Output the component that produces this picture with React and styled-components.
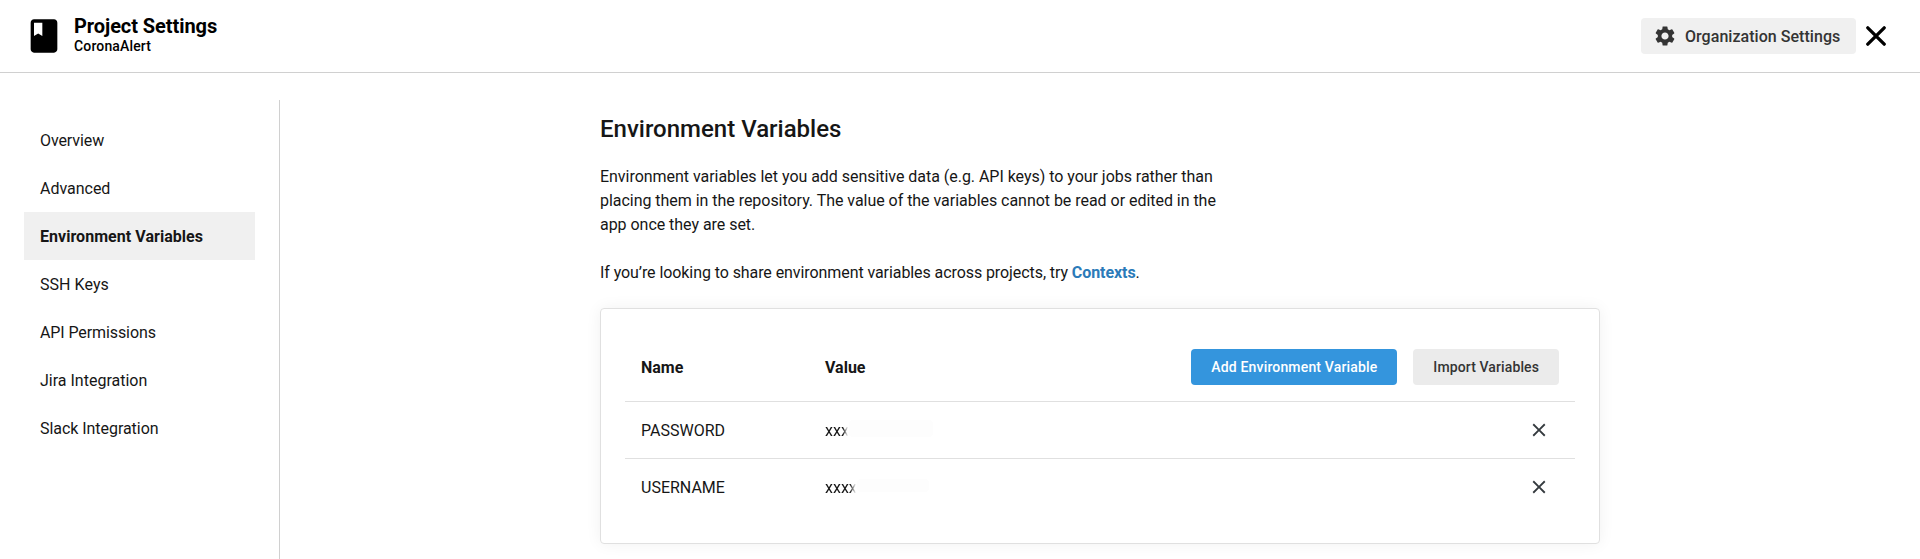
import React from "react";
import styled, { createGlobalStyle } from "styled-components";
import { MdBook, MdClose, MdSettings } from "react-icons/md";

const GlobalStyle = createGlobalStyle`
  *, *::before, *::after { box-sizing: border-box; }
  body {
    margin: 0;
    background: #fff;
    color: #161616;
    font-family: Roboto, "Liberation Sans", sans-serif;
    font-size: 16px;
    line-height: 24px;
  }
`;

const Page = styled.div`
  display: flex;
  flex-direction: column;
  height: 559px;
  overflow: hidden;
`;

const Header = styled.header`
  display: flex;
  align-items: center;
  flex: none;
  height: 73px;
  padding: 0 34px 0 24px;
  border-bottom: 1px solid #d0d0d0;
  color: #000;
`;

const ProjectIcon = styled(MdBook)`
  width: 40px;
  height: 40px;
  flex: none;
`;

const HeaderText = styled.div`
  flex: 1;
  margin-left: 10px;
  padding-bottom: 4px;
`;

const HeaderTitle = styled.div`
  font-size: 20px;
  font-weight: 700;
  line-height: 24px;
  letter-spacing: -0.07px;
`;

const HeaderSubtitle = styled.div`
  font-size: 14px;
  font-weight: 500;
  line-height: 16px;
  letter-spacing: 0.15px;
`;

const OrgButton = styled.button`
  display: flex;
  align-items: center;
  gap: 8px;
  width: 215px;
  height: 36px;
  padding: 0 0 0 12px;
  border: 0;
  border-radius: 4px;
  background: #f0f0f0;
  color: #343434;
  font: 500 16px/24px Roboto, sans-serif;
  letter-spacing: 0.04px;
  white-space: nowrap;
`;

const OrgLabel = styled.span`
  padding-top: 1px;
`;

const CloseButton = styled.button`
  display: flex;
  margin-left: 10px;
  padding: 0;
  border: 0;
  background: none;
  color: #000;
`;

const Body = styled.div`
  display: flex;
  flex: 1;
  min-height: 0;
  padding-top: 27px;
`;

const Sidebar = styled.nav`
  flex: none;
  width: 280px;
  padding: 16px 24px;
  border-right: 1px solid #d0d0d0;
`;

const NavItem = styled.a`
  display: block;
  padding: 13px 16px 11px;
  background: ${(p) => (p.$active ? "#f0f0f0" : "transparent")};
  font-weight: ${(p) => (p.$active ? 700 : 400)};
  letter-spacing: ${(p) => p.$tracking}px;
`;

const Main = styled.main`
  width: 1000px;
  margin: 13px auto 0;
`;

const Title = styled.h1`
  margin: 0 0 20px;
  font-size: 24px;
  font-weight: 500;
  line-height: 32px;
`;

const Paragraph = styled.p`
  width: 640px;
  margin: 0 0 24px;
  letter-spacing: -0.035px;

  &:last-of-type {
    margin-bottom: 23px;
    letter-spacing: -0.08px;
  }
`;

const Link = styled.a`
  color: #2b7bb9;
  font-weight: 700;
`;

const Card = styled.section`
  padding: 24px 24px 28px;
  border: 1px solid #e0e0e0;
  border-radius: 4px;
  box-shadow: 0 0 16px rgba(0, 0, 0, 0.06);
`;

const Row = styled.div`
  display: grid;
  grid-template-columns: 184px 1fr auto;
  align-items: center;
  height: ${(p) => (p.$head ? 69 : 57)}px;
  padding: 0 16px;
  border-bottom: 1px solid #e0e0e0;
  font-weight: ${(p) => (p.$head ? 700 : 400)};

  &:last-child {
    height: 56px;
    border-bottom: 0;
  }
`;

const Cell = styled.div`
  display: flex;
  align-items: center;
  padding-top: 2px;
`;

const Actions = styled.div`
  display: flex;
  gap: 16px;
`;

const Button = styled.button`
  height: 36px;
  padding: 0 20px;
  border: 0;
  border-radius: 4px;
  background: ${(p) => (p.$primary ? "#3495dd" : "#ebebeb")};
  color: ${(p) => (p.$primary ? "#fff" : "#343434")};
  font: 500 14px/20px Roboto, sans-serif;
  letter-spacing: ${(p) => (p.$primary ? 0.16 : 0.11)}px;
`;

const DeleteButton = styled.button`
  display: flex;
  margin-right: 9px;
  padding: 0;
  border: 0;
  background: none;
  color: #343a3e;
`;

const MaskedText = styled.span`
  mask-image: linear-gradient(
    to right,
    #000 calc(100% - ${(p) => p.$fade}px),
    transparent calc(100% - 1px)
  );
`;

const Redaction = styled.span`
  width: ${(p) => p.$width}px;
  height: ${(p) => p.$height}px;
  margin-top: -6px;
  border-radius: 4px;
  background: #fdfdfd;
`;

const CloseIcon = () => (
  <svg width="20" height="20" viewBox="0 0 20 20" fill="none">
    <path
      d="M1.8 1.8L18.2 18.2M18.2 1.8L1.8 18.2"
      stroke="currentColor"
      strokeWidth="3.3"
      strokeLinecap="round"
    />
  </svg>
);

const NAV = [
  { label: "Overview", tracking: -0.1 },
  { label: "Advanced", tracking: -0.02 },
  { label: "Environment Variables", tracking: 0.04, active: true },
  { label: "SSH Keys", tracking: 0.05 },
  { label: "API Permissions", tracking: -0.1 },
  { label: "Jira Integration", tracking: 0 },
  { label: "Slack Integration", tracking: -0.05 },
];

const VARIABLES = [
  { name: "PASSWORD", value: "xxx", fade: 6, width: 84, height: 17 },
  { name: "USERNAME", value: "xxxx", fade: 7, width: 72, height: 13 },
];

export default function App() {
  return (
    <Page>
      <GlobalStyle />
      <Header>
        <ProjectIcon />
        <HeaderText>
          <HeaderTitle>Project Settings</HeaderTitle>
          <HeaderSubtitle>CoronaAlert</HeaderSubtitle>
        </HeaderText>
        <OrgButton>
          <MdSettings size={24} />
          <OrgLabel>Organization Settings</OrgLabel>
        </OrgButton>
        <CloseButton aria-label="Close">
          <CloseIcon />
        </CloseButton>
      </Header>
      <Body>
        <Sidebar>
          {NAV.map((item) => (
            <NavItem
              key={item.label}
              $active={item.active}
              $tracking={item.tracking}
            >
              {item.label}
            </NavItem>
          ))}
        </Sidebar>
        <Main>
          <Title>Environment Variables</Title>
          <Paragraph>
            Environment variables let you add sensitive data (e.g. API keys) to
            your jobs rather than placing them in the repository. The value of
            the variables cannot be read or edited in the app once they are set.
          </Paragraph>
          <Paragraph>
            If you’re looking to share environment variables across projects,
            try <Link>Contexts</Link>.
          </Paragraph>
          <Card>
            <Row $head>
              <Cell>Name</Cell>
              <Cell>Value</Cell>
              <Actions>
                <Button $primary>Add Environment Variable</Button>
                <Button>Import Variables</Button>
              </Actions>
            </Row>
            {VARIABLES.map((v) => (
              <Row key={v.name}>
                <Cell>{v.name}</Cell>
                <Cell>
                  <MaskedText $fade={v.fade}>{v.value}</MaskedText>
                  <Redaction $width={v.width} $height={v.height} />
                </Cell>
                <DeleteButton aria-label="Delete">
                  <MdClose size={22} />
                </DeleteButton>
              </Row>
            ))}
          </Card>
        </Main>
      </Body>
    </Page>
  );
}
